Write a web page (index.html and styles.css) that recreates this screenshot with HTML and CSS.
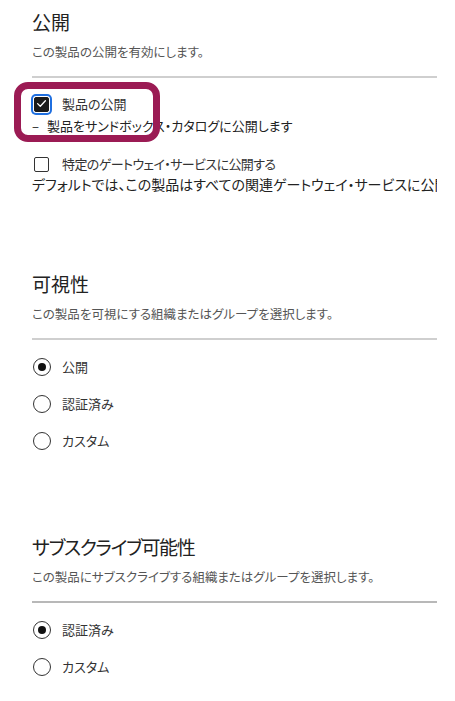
FILE: index.html
```html
<!DOCTYPE html>
<html lang="ja">
<head>
<meta charset="utf-8">
<link rel="stylesheet" href="styles.css">
</head>
<body>
<div class="page">
  <section class="section s1">
    <h2 class="title">公開</h2>
    <p class="desc">この製品の公開を有効にします。</p>
    <div class="divider"></div>
    <div class="row check-row first">
      <span class="cbox checked">
        <svg width="15" height="15" viewBox="0 0 15 15"><path d="M3.6 7.6 L6.3 10.2 L11.4 4.8" fill="none" stroke="#fff" stroke-width="1.3" stroke-linecap="round" stroke-linejoin="round"/></svg>
      </span>
      <span class="label">製品の公開</span>
    </div>
    <div class="subline"><span class="dash">–</span>製品をサンドボックス・カタログに公開します</div>
    <div class="row check-row second">
      <span class="cbox"></span>
      <span class="label tight">特定のゲートウェイ・サービスに公開する</span>
    </div>
    <div class="note">デフォルトでは、この製品はすべての関連ゲートウェイ・サービスに公開されます。</div>
  </section>

  <section class="section s2">
    <h2 class="title">可視性</h2>
    <p class="desc">この製品を可視にする組織またはグループを選択します。</p>
    <div class="divider"></div>
    <div class="radios">
      <div class="row radio-row"><span class="radio on"></span><span class="label">公開</span></div>
      <div class="row radio-row"><span class="radio"></span><span class="label">認証済み</span></div>
      <div class="row radio-row"><span class="radio"></span><span class="label">カスタム</span></div>
    </div>
  </section>

  <section class="section s3">
    <h2 class="title tight">サブスクライブ可能性</h2>
    <p class="desc">この製品にサブスクライブする組織またはグループを選択します。</p>
    <div class="divider"></div>
    <div class="radios">
      <div class="row radio-row"><span class="radio on"></span><span class="label">認証済み</span></div>
      <div class="row radio-row"><span class="radio"></span><span class="label">カスタム</span></div>
    </div>
  </section>

  <div class="highlight"></div>
</div>
</body>
</html>
```

FILE: styles.css
```css
* { box-sizing: border-box; }
html, body { margin: 0; padding: 0; background: #fff; }
body {
  font-family: "Noto Sans CJK JP", "Noto Sans", sans-serif;
  font-feature-settings: "palt";
  color: #333;
}
.page {
  position: relative;
  width: 455px;
  height: 701px;
  padding: 8px 0 0 32px;
  overflow: hidden;
}
.section { width: 405px; }
.s2 { margin-top: 75px; }
.s3 { margin-top: 82px; }
.title {
  margin: 0;
  font-size: 19px;
  line-height: 28px;
  font-weight: 400;
  color: #222;
}
.title.tight { letter-spacing: -1.3px; }
.desc {
  margin: 7px 0 0;
  font-size: 12.5px;
  line-height: 18px;
  color: #555;
}
.divider {
  margin-top: 15px;
  height: 2px;
  background: #cfcfcf;
}
.s3 .divider { background: #b8b8b8; }
.row {
  display: flex;
  align-items: center;
  height: 20px;
}
.label { font-size: 13px; line-height: 20px; color: #333; white-space: nowrap; }
.label.tight { letter-spacing: -0.6px; }
.check-row .label { margin-left: 13px; }
.check-row.first { margin-top: 16px; }
.check-row.second { margin-top: 19px; }
.cbox {
  flex: none;
  width: 15px;
  height: 15px;
  margin-left: 2px;
  border: 1.5px solid #333;
  border-radius: 2px;
  background: #fff;
  display: flex;
}
.cbox svg { margin: -1.5px; }
.cbox.checked {
  background: #1b1b1b;
  border-color: #1b1b1b;
  box-shadow: 0 0 0 1px #fff, 0 0 0 3px #1f6fe0;
}
.subline {
  margin-top: 3px;
  font-size: 13px;
  line-height: 18px;
  color: #222;
  white-space: nowrap;
}
.dash { display: inline-block; width: 15px; }
.note {
  width: 405px;
  overflow: hidden;
  margin-top: 0;
  font-size: 14px;
  line-height: 21px;
  color: #222;
  white-space: nowrap;
}
.radios {
  margin-top: 17px;
  display: flex;
  flex-direction: column;
  gap: 17px;
}
.radio {
  flex: none;
  width: 18px;
  height: 18px;
  margin-left: 1px;
  border: 1.5px solid #333;
  border-radius: 50%;
  display: flex;
  align-items: center;
  justify-content: center;
}
.radio.on::after {
  content: "";
  width: 8px;
  height: 8px;
  border-radius: 50%;
  background: #111;
}
.radio-row .label { margin-left: 11px; }
.highlight {
  position: absolute;
  left: 14px;
  top: 82px;
  width: 146px;
  height: 60px;
  border: 7px solid #9b1b54;
  border-radius: 14px;
  pointer-events: none;
}
```
